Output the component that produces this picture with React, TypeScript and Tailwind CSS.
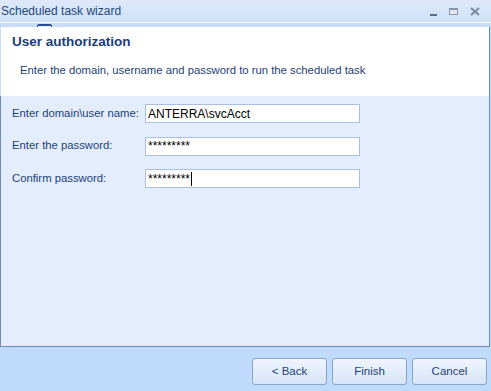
import React from 'react';

const font = { fontFamily: '"Liberation Sans", Arial, sans-serif' };

function Field({ label, value, caret }: { label: string; value: string; caret?: boolean }) {
  return (
    <div className="flex items-center h-[19px]">
      <div className="w-[133px] whitespace-nowrap text-[11.3px] text-[#1e3f7a] leading-none">{label}</div>
      <div className="w-[215px] h-[19px] bg-white border border-[#a9c0e2] flex items-center pl-[2px]">
        <span className="text-[12px] text-black leading-none">{value}</span>
        {caret && <span className="w-px h-[14px] bg-black ml-px" />}
      </div>
    </div>
  );
}

function WizButton({ children }: { children: React.ReactNode }) {
  return (
    <button className="w-[75px] h-[27px] rounded-[3px] border border-[#8aa5c9] bg-gradient-to-b from-[#eef4fd] via-[#e3edfb] to-[#d5e4f8] text-[11.5px] text-[#1e3f7a]">
      {children}
    </button>
  );
}

export default function App() {
  return (
    <div className="w-[491px] h-[391px] flex flex-col bg-[#c0dafc] overflow-hidden" style={font}>
      {/* title bar */}
      <div className="h-[22px] flex items-center justify-between bg-gradient-to-b from-[#dde9fa] to-[#cfe1f8]">
        <span className="text-[12px] text-[#28487e] pl-px">Scheduled task wizard</span>
        <div className="flex items-center gap-[12px] pr-[11px]">
          <span className="w-[7px] h-[2px] bg-[#5a6e8c] mt-[7px]" />
          <span className="w-[9px] h-[7px] border border-[#8a96a8] border-t-[2px] bg-[#e4e8ee]" />
          <svg width="10" height="9" viewBox="0 0 10 9">
            <path d="M1 1 L9 8 M9 1 L1 8" stroke="#7d8aa0" strokeWidth="2" />
          </svg>
        </div>
      </div>
      <div className="h-px bg-white" />
      <div className="h-[4px] bg-[#c7dcfa] pl-[37px] flex items-end">
        <div className="w-[15px] h-[3px] border-t-[2px] border-x border-[#2a4f8e] rounded-t-[2px] bg-[#e8f0fc]" />
      </div>

      {/* main panel */}
      <div className="h-[320px] mr-px flex flex-col border-r border-b border-[#6d8cbc]">
        <div className="h-[69px] bg-white border-l border-[#c7dcfa] pl-[11px] pt-[6px]">
          <div className="text-[13.5px] font-bold text-[#1c3c7a] leading-[18px]">User authorization</div>
          <div className="text-[11.3px] text-[#1e3f7a] pl-[8px] mt-[12px] leading-[14px] whitespace-nowrap">
            Enter the domain, username and password to run the scheduled task
          </div>
        </div>
        <div className="flex-1 bg-[#e3edfd] border-l border-[#6d8cbc] pl-[11px] pt-[8px] flex flex-col gap-[13.5px]">
          <Field label="Enter domain\user name:" value="ANTERRA\svcAcct" />
          <Field label="Enter the password:" value="*********" />
          <Field label="Confirm password:" value="*********" caret />
        </div>
      </div>

      {/* footer */}
      <div className="flex-1 flex items-start justify-end gap-[5px] pr-[4px] pt-[11px]">
        <WizButton>&lt; Back</WizButton>
        <WizButton>Finish</WizButton>
        <WizButton>Cancel</WizButton>
      </div>
    </div>
  );
}
